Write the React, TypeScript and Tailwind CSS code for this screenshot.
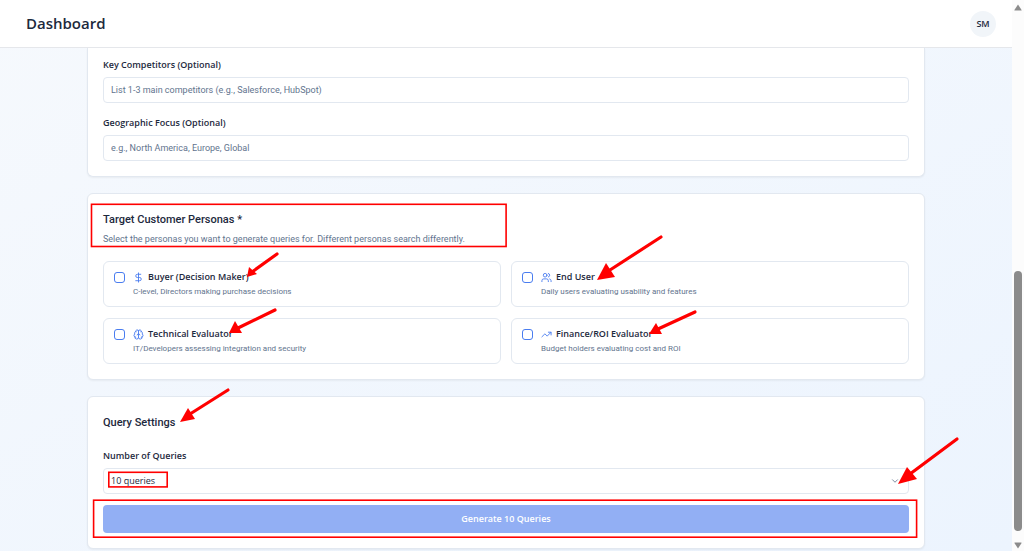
import { useState } from "react";
import {
  Brain,
  ChevronDown,
  DollarSign,
  TrendingUp,
  Users,
} from "lucide-react";

const personas = [
  {
    id: "buyer",
    icon: <DollarSign size={11} />,
    label: "Buyer (Decision Maker)",
    description: "C-level, Directors making purchase decisions",
  },
  {
    id: "end-user",
    icon: <Users size={11} />,
    label: "End User",
    description: "Daily users evaluating usability and features",
  },
  {
    id: "technical",
    icon: <Brain size={11} />,
    label: "Technical Evaluator",
    description: "IT/Developers assessing integration and security",
  },
  {
    id: "finance",
    icon: <TrendingUp size={11} />,
    label: "Finance/ROI Evaluator",
    description: "Budget holders evaluating cost and ROI",
  },
];

const arrows = [
  { tail: [277, 254], neck: [252, 272], head: "247,277 249,267 257,274" },
  { tail: [275, 310], neck: [238, 328], head: "229,333 235,321 242,333" },
  { tail: [661, 237], neck: [610, 270], head: "597,280 606,263 615,277" },
  { tail: [695, 312], neck: [658, 329], head: "649,334 656,323 662,334" },
  { tail: [228, 390], neck: [190, 414], head: "180,422 188,408 195,419" },
  { tail: [957, 439], neck: [910, 474], head: "898,484 907,467 917,479" },
];

function Header() {
  return (
    <header className="flex h-12 shrink-0 items-center justify-between border-b border-gray-200 bg-white pr-4 pl-[26px]">
      <h1 className="text-[15px] font-semibold text-slate-800">Dashboard</h1>
      <button
        type="button"
        className="flex size-[26px] items-center justify-center rounded-full bg-slate-100 text-[9px] font-semibold text-slate-800"
      >
        SM
      </button>
    </header>
  );
}

interface FieldProps {
  id: string;
  label: string;
  placeholder: string;
}

function Field({ id, label, placeholder }: FieldProps) {
  return (
    <div className="flex flex-col gap-1">
      <label
        htmlFor={id}
        className="text-[9px] leading-4 font-semibold text-slate-800"
      >
        {label}
      </label>
      <input
        id={id}
        type="text"
        placeholder={placeholder}
        className="h-[26px] w-full rounded border border-slate-200 bg-white px-[7px] font-['Roboto','Noto_Sans',sans-serif] text-[9px] text-slate-800 placeholder:text-slate-500"
      />
    </div>
  );
}

function SectionTitle({ children }: { children: string }) {
  return (
    <h2 className="font-['Roboto','Noto_Sans',sans-serif] text-[11px] leading-[22px] font-medium text-slate-800">
      {children}
    </h2>
  );
}

function PersonaList() {
  const [selected, setSelected] = useState<string[]>([]);

  const toggle = (id: string) => {
    setSelected((prev) =>
      prev.includes(id) ? prev.filter((p) => p !== id) : [...prev, id]
    );
  };

  return (
    <div className="mt-[14px] grid grid-cols-2 gap-x-[10px] gap-y-[11px]">
      {personas.map((persona) => (
        <label
          key={persona.id}
          htmlFor={persona.id}
          className="flex cursor-pointer items-start gap-2 rounded-md border border-slate-200 px-[10px] py-[7px]"
        >
          <input
            id={persona.id}
            type="checkbox"
            checked={selected.includes(persona.id)}
            onChange={() => toggle(persona.id)}
            className="mt-[3px] size-[11px] shrink-0 appearance-none rounded-[3px] border border-[#4a7df0] checked:bg-[#4a7df0]"
          />
          <span className="flex flex-col">
            <span className="flex items-center gap-1 text-[9px] leading-4 font-semibold text-slate-800">
              <span className="text-[#4a7df0]">{persona.icon}</span>
              {persona.label}
            </span>
            <span className="font-['Roboto','Noto_Sans',sans-serif] text-[8px] leading-[14px] text-slate-500">
              {persona.description}
            </span>
          </span>
        </label>
      ))}
    </div>
  );
}

function Annotations() {
  return (
    <svg
      className="pointer-events-none absolute top-0 left-0"
      width="1024"
      height="551"
      viewBox="0 0 1024 551"
      fill="none"
      stroke="#ff0000"
      aria-hidden="true"
    >
      <g strokeWidth="1.6">
        <rect x="91.5" y="204.3" width="414.6" height="42.2" />
        <rect x="108.8" y="472.3" width="58.4" height="14.6" />
        <rect x="93.6" y="500.2" width="823" height="37" />
      </g>
      {arrows.map((arrow) => (
        <g key={arrow.head}>
          <line
            x1={arrow.tail[0]}
            y1={arrow.tail[1]}
            x2={arrow.neck[0]}
            y2={arrow.neck[1]}
            strokeWidth="3.2"
            strokeLinecap="round"
          />
          <polygon points={arrow.head} fill="#ff0000" stroke="none" />
        </g>
      ))}
    </svg>
  );
}

function Scrollbar() {
  return (
    <div className="flex w-3 shrink-0 flex-col items-center justify-between bg-[#fcfcfc] pt-1 pb-[2px]">
      <svg width="8" height="7" viewBox="0 0 8 7" fill="#8b8b8b">
        <path d="M4 0.5 L7.6 6 Q7.8 6.6 7 6.6 H1 Q0.2 6.6 0.4 6 Z" />
      </svg>
      <div className="flex w-full grow flex-col items-center justify-end pb-[11px]">
        <div className="h-1/2 w-2 rounded-full bg-[#8b8b8b]" />
      </div>
      <svg width="8" height="7" viewBox="0 0 8 7" fill="#8b8b8b">
        <path d="M4 6.5 L7.6 1 Q7.8 0.4 7 0.4 H1 Q0.2 0.4 0.4 1 Z" />
      </svg>
    </div>
  );
}

export default function App() {
  const [count, setCount] = useState("10");

  return (
    <div className="relative flex h-screen overflow-hidden font-['Open_Sans','Noto_Sans',sans-serif]">
      <div className="flex min-w-0 flex-1 flex-col bg-linear-to-br from-[#f6f9fd] to-[#ecf4fe]">
        <Header />
        <main className="mx-auto flex w-full max-w-[838px] flex-col gap-4">
          <section className="flex flex-col gap-3 rounded-b-md border border-t-0 border-slate-200 bg-white px-[15px] pt-[9px] pb-[15px] shadow-xs">
            <Field
              id="competitors"
              label="Key Competitors (Optional)"
              placeholder="List 1-3 main competitors (e.g., Salesforce, HubSpot)"
            />
            <Field
              id="geography"
              label="Geographic Focus (Optional)"
              placeholder="e.g., North America, Europe, Global"
            />
          </section>

          <section className="rounded-md border border-slate-200 bg-white p-[15px] shadow-xs">
            <SectionTitle>Target Customer Personas *</SectionTitle>
            <p className="font-['Roboto','Noto_Sans',sans-serif] text-[9px] leading-4 text-slate-500">
              Select the personas you want to generate queries for. Different
              personas search differently.
            </p>
            <PersonaList />
          </section>

          <section className="flex flex-col rounded-md border border-slate-200 bg-white p-[15px] shadow-xs">
            <SectionTitle>Query Settings</SectionTitle>
            <label
              htmlFor="query-count"
              className="mt-[14px] text-[9px] leading-4 font-semibold text-slate-800"
            >
              Number of Queries
            </label>
            <div className="relative mt-1">
              <select
                id="query-count"
                value={count}
                onChange={(e) => setCount(e.target.value)}
                className="block h-[26px] w-full appearance-none rounded border border-slate-200 bg-white px-[7px] text-[9px] text-slate-800"
              >
                <option value="10">10 queries</option>
                <option value="20">20 queries</option>
                <option value="50">50 queries</option>
              </select>
              <ChevronDown
                size={10}
                className="pointer-events-none absolute top-2 right-[9px] text-slate-500"
              />
            </div>
            <button
              type="button"
              className="mt-[11px] h-7 rounded bg-[#92aff4] text-[9px] font-semibold text-white"
            >
              Generate {count} Queries
            </button>
          </section>
        </main>
      </div>
      <Scrollbar />
      <Annotations />
    </div>
  );
}
